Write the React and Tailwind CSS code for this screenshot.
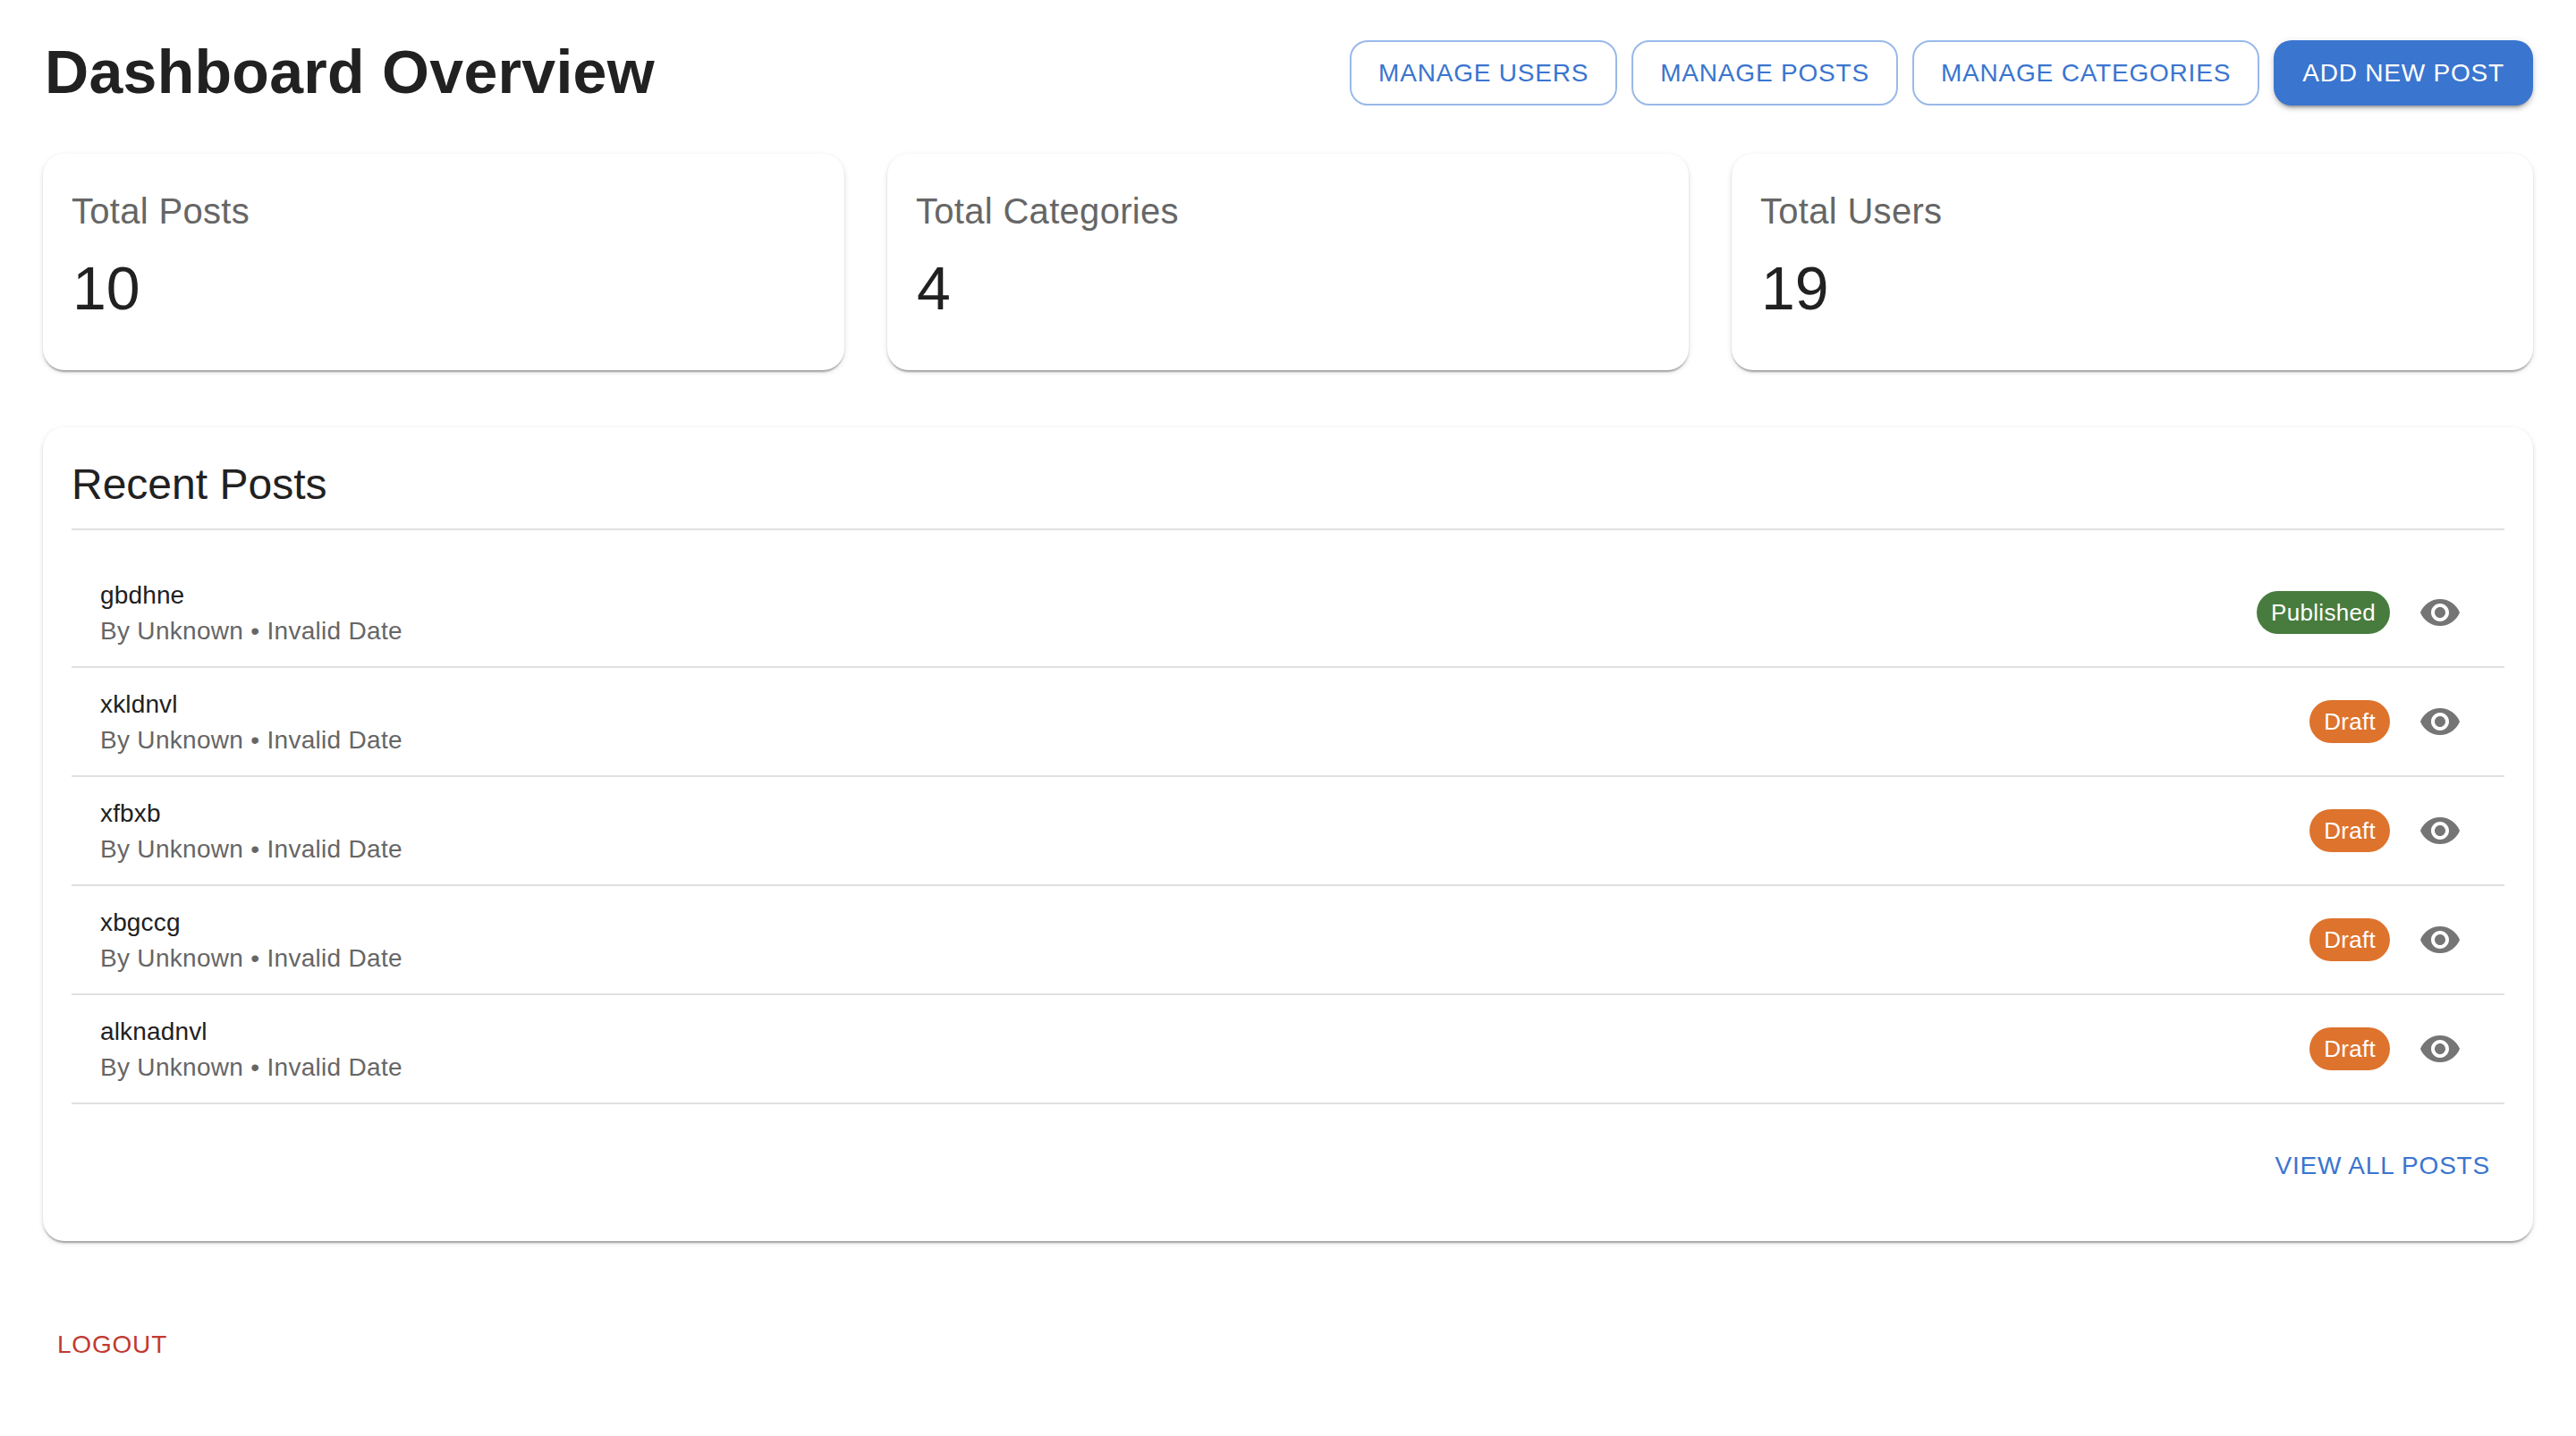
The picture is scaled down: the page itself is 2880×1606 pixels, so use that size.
const stats = [
  { label: "Total Posts", value: "10" },
  { label: "Total Categories", value: "4" },
  { label: "Total Users", value: "19" },
];

const posts = [
  { title: "gbdhne", status: "Published" },
  { title: "xkldnvl", status: "Draft" },
  { title: "xfbxb", status: "Draft" },
  { title: "xbgccg", status: "Draft" },
  { title: "alknadnvl", status: "Draft" },
];

const cardShadow =
  "shadow-[0_4px_2px_-2px_rgba(0,0,0,0.2),0_2px_2px_0_rgba(0,0,0,0.14),0_2px_6px_0_rgba(0,0,0,0.12)]";
const buttonShadow =
  "shadow-[0_6px_2px_-4px_rgba(0,0,0,0.2),0_4px_4px_0_rgba(0,0,0,0.14),0_2px_10px_0_rgba(0,0,0,0.12)]";

function OutlineButton({ children }) {
  return (
    <button className="h-[73px] px-[30px] border-2 border-[#99b9e8] rounded-[20px] text-[28px] tracking-[0.8px] text-[#3a75cf] bg-white whitespace-nowrap">
      {children}
    </button>
  );
}

function EyeIcon() {
  return (
    <svg viewBox="0 0 24 24" className="w-12 h-12 fill-[#757575]">
      <path d="M12 4.5C7 4.5 2.73 7.61 1 12c1.73 4.39 6 7.5 11 7.5s9.27-3.11 11-7.5c-1.73-4.39-6-7.5-11-7.5zM12 17c-2.76 0-5-2.24-5-5s2.24-5 5-5 5 2.24 5 5-2.24 5-5 5zm0-8c-1.66 0-3 1.34-3 3s1.34 3 3 3 3-1.34 3-3-1.34-3-3-3z" />
    </svg>
  );
}

function PostRow({ post }) {
  const published = post.status === "Published";
  return (
    <div className="h-[122px] flex items-center justify-between pl-8 pr-8 border-b-2 border-[#e0e0e0]">
      <div className="pt-0.5">
        <div className="text-[28px] leading-[40px] tracking-[0.15px] text-[#212121]">{post.title}</div>
        <div className="text-[28px] leading-[40px] tracking-[0.3px] text-[#666666]">By Unknown • Invalid Date</div>
      </div>
      <div className="flex items-center gap-4">
        <span
          className={
            "h-12 px-4 rounded-full flex items-center text-[26px] tracking-[0.3px] text-white " +
            (published ? "bg-[#487c3e]" : "bg-[#de732d]")
          }
        >
          {post.status}
        </span>
        <button className="w-20 h-20 flex items-center justify-center">
          <EyeIcon />
        </button>
      </div>
    </div>
  );
}

export default function App() {
  return (
    <div className="min-h-[1606px] bg-white px-12 pt-[38px] font-['Liberation_Sans',sans-serif] text-[#212121]">
      <div className="h-[84px] flex items-center justify-between mb-[50px]">
        <h1 className="pl-0.5 text-[68px] leading-[84px] tracking-[0.3px] font-bold">Dashboard Overview</h1>
        <div className="flex gap-4 pt-[3px]">
          <OutlineButton>MANAGE USERS</OutlineButton>
          <OutlineButton>MANAGE POSTS</OutlineButton>
          <OutlineButton>MANAGE CATEGORIES</OutlineButton>
          <button className={"h-[73px] px-8 rounded-[20px] text-[28px] tracking-[0.8px] text-white bg-[#3a75cf] whitespace-nowrap " + buttonShadow}>
            ADD NEW POST
          </button>
        </div>
      </div>

      <div className="grid grid-cols-3 gap-12 mb-16">
        {stats.map((s) => (
          <div key={s.label} className={"h-[242px] rounded-[24px] bg-white px-8 pt-8 " + cardShadow}>
            <div className="text-[40px] leading-[64px] tracking-[0.3px] text-[#666666] mb-3">{s.label}</div>
            <div className="pl-px text-[68px] leading-[84px]">{s.value}</div>
          </div>
        ))}
      </div>

      <div className={"h-[910px] rounded-[24px] bg-white p-8 " + cardShadow}>
        <h2 className="text-[48px] leading-[64px] pb-[17px] border-b-2 border-[#e0e0e0]">Recent Posts</h2>
        <div className="pt-8">
          {posts.map((p) => (
            <PostRow key={p.title} post={p} />
          ))}
        </div>
        <div className="flex justify-end mt-8">
          <button className="h-[73px] px-4 text-[28px] tracking-[0.8px] text-[#3a75cf]">VIEW ALL POSTS</button>
        </div>
      </div>

      <div className="mt-[79px]">
        <button className="h-[73px] px-4 text-[28px] tracking-[0.8px] text-[#c23a32]">LOGOUT</button>
      </div>
    </div>
  );
}
